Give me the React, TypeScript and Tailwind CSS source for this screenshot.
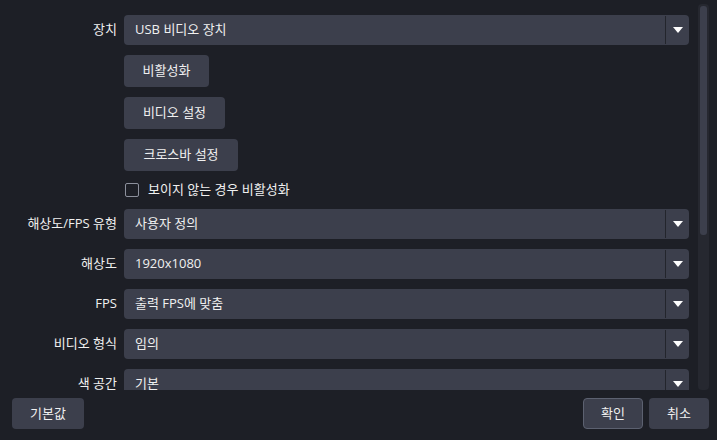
import React from "react";

const font = { fontFamily: '"Open Sans", "Noto Sans CJK KR", sans-serif' };

function Arrow() {
  return (
    <svg width="10" height="6" viewBox="0 0 10 6" className="block">
      <path d="M0 0 L10 0 L5 6 Z" fill="#ffffff" />
    </svg>
  );
}

function Combo({ value }: { value: string }) {
  return (
    <div className="flex h-[30px] w-[565px] shrink-0 items-stretch rounded-[4px] bg-[#3c3f4c]">
      <div className="flex flex-1 items-center pl-[11px] text-[13px] text-[#f0f0f0]">{value}</div>
      <div className="my-[1px] w-px bg-[#23252c]" />
      <div className="flex w-[23px] items-center justify-center">
        <Arrow />
      </div>
    </div>
  );
}

function Row({ label, children, h = "h-[30px]" }: { label?: string; children: React.ReactNode; h?: string }) {
  return (
    <div className={`flex ${h} items-center gap-[7px]`}>
      <div className="w-[117px] shrink-0 text-right text-[13px] text-[#f0f0f0]">{label}</div>
      {children}
    </div>
  );
}

function Btn({ label, w }: { label: string; w: string }) {
  return (
    <div className={`flex h-[32px] ${w} items-center justify-center rounded-[4px] bg-[#3c3f4c] text-[13px] text-[#f0f0f0]`}>
      {label}
    </div>
  );
}

export default function App() {
  return (
    <div className="relative h-[440px] w-[717px] overflow-hidden bg-[#1d1f26]" style={font}>
      <div className="flex h-[390px]">
        <div className="flex w-[689px] flex-col gap-[10px] overflow-hidden pt-[15px]">
          <Row label="장치">
            <Combo value="USB 비디오 장치" />
          </Row>
          <Row h="h-[32px]">
            <Btn label="비활성화" w="w-[85px]" />
          </Row>
          <Row h="h-[32px]">
            <Btn label="비디오 설정" w="w-[101px]" />
          </Row>
          <Row h="h-[32px]">
            <Btn label="크로스바 설정" w="w-[114px]" />
          </Row>
          <Row h="h-[18px]">
            <div className="flex items-center gap-[9px] pl-[1px]">
              <div className="h-[14px] w-[14px] rounded-[2px] border border-[#8c909c]" />
              <span className="text-[13px] text-[#f0f0f0]">보이지 않는 경우 비활성화</span>
            </div>
          </Row>
          <Row label="해상도/FPS 유형">
            <Combo value="사용자 정의" />
          </Row>
          <Row label="해상도">
            <Combo value="1920x1080" />
          </Row>
          <Row label="FPS">
            <Combo value="출력 FPS에 맞춤" />
          </Row>
          <Row label="비디오 형식">
            <Combo value="임의" />
          </Row>
          <Row label="색 공간">
            <Combo value="기본" />
          </Row>
        </div>
        <div className="ml-[9px] mt-[4px] h-[386px] w-[11px] rounded-[4px] bg-[#262830] p-[2px]">
          <div className="h-[229px] w-full rounded-[3px] bg-[#3c3f4c]" />
        </div>
      </div>
      <div className="mt-[8px] flex items-center px-[8px]">
        <div className="ml-[4px] flex h-[31px] w-[72px] items-center justify-center rounded-[4px] bg-[#3c3f4c] text-[13px] text-[#f0f0f0]">
          기본값
        </div>
        <div className="flex-1" />
        <div className="flex h-[31px] w-[60px] items-center justify-center rounded-[4px] border border-[#5c6170] bg-[#3c3f4c] text-[13px] text-[#f0f0f0]">
          확인
        </div>
        <div className="ml-[6px] flex h-[31px] w-[60px] items-center justify-center rounded-[4px] bg-[#3c3f4c] text-[13px] text-[#f0f0f0]">
          취소
        </div>
      </div>
    </div>
  );
}
